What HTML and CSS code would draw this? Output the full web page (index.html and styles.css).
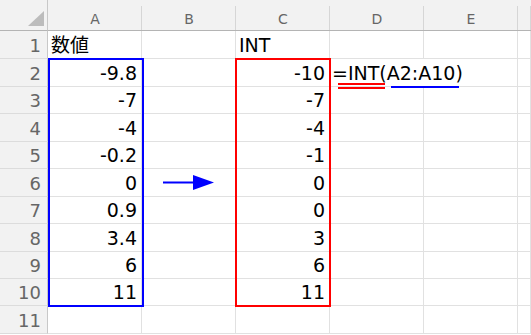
FILE: index.html
```html
<!DOCTYPE html>
<html lang="ja">
<head>
  <meta charset="UTF-8">
  <title>INT関数</title>
  <link rel="stylesheet" href="styles.css">
</head>
<body>
  <div class="sheet">
    <!-- Column headers -->
    <div class="corner">
      <svg width="16" height="15" viewBox="0 0 16 15"><polygon points="16,0 16,15 0,15" fill="#bcbcbc"/></svg>
    </div>
    <div class="col-head">A</div>
    <div class="col-head">B</div>
    <div class="col-head">C</div>
    <div class="col-head">D</div>
    <div class="col-head">E</div>
    <div class="col-head"></div>

    <!-- Row 1 -->
    <div class="row-head">1</div>
    <div class="cell text">数値</div>
    <div class="cell"></div>
    <div class="cell text">INT</div>
    <div class="cell"></div>
    <div class="cell"></div>
    <div class="cell"></div>

    <!-- Row 2 -->
    <div class="row-head">2</div>
    <div class="cell num">-9.8</div>
    <div class="cell"></div>
    <div class="cell num">-10</div>
    <div class="cell text spill">
      =INT(A2:A10)
      <span class="mark mark-red"></span>
      <span class="mark mark-blue"></span>
    </div>
    <div class="cell"></div>
    <div class="cell"></div>

    <!-- Row 3 -->
    <div class="row-head">3</div>
    <div class="cell num">-7</div>
    <div class="cell"></div>
    <div class="cell num">-7</div>
    <div class="cell"></div>
    <div class="cell"></div>
    <div class="cell"></div>

    <!-- Row 4 -->
    <div class="row-head">4</div>
    <div class="cell num">-4</div>
    <div class="cell"></div>
    <div class="cell num">-4</div>
    <div class="cell"></div>
    <div class="cell"></div>
    <div class="cell"></div>

    <!-- Row 5 -->
    <div class="row-head">5</div>
    <div class="cell num">-0.2</div>
    <div class="cell"></div>
    <div class="cell num">-1</div>
    <div class="cell"></div>
    <div class="cell"></div>
    <div class="cell"></div>

    <!-- Row 6 -->
    <div class="row-head">6</div>
    <div class="cell num">0</div>
    <div class="cell arrow">
      <svg width="52" height="15" viewBox="0 0 52 15"><rect x="0" y="6.5" width="32" height="2" fill="#0000ff"/><polygon points="30,0 51,7.5 30,15" fill="#0000ff"/></svg>
    </div>
    <div class="cell num">0</div>
    <div class="cell"></div>
    <div class="cell"></div>
    <div class="cell"></div>

    <!-- Row 7 -->
    <div class="row-head">7</div>
    <div class="cell num">0.9</div>
    <div class="cell"></div>
    <div class="cell num">0</div>
    <div class="cell"></div>
    <div class="cell"></div>
    <div class="cell"></div>

    <!-- Row 8 -->
    <div class="row-head">8</div>
    <div class="cell num">3.4</div>
    <div class="cell"></div>
    <div class="cell num">3</div>
    <div class="cell"></div>
    <div class="cell"></div>
    <div class="cell"></div>

    <!-- Row 9 -->
    <div class="row-head">9</div>
    <div class="cell num">6</div>
    <div class="cell"></div>
    <div class="cell num">6</div>
    <div class="cell"></div>
    <div class="cell"></div>
    <div class="cell"></div>

    <!-- Row 10 -->
    <div class="row-head">10</div>
    <div class="cell num">11</div>
    <div class="cell"></div>
    <div class="cell num">11</div>
    <div class="cell"></div>
    <div class="cell"></div>
    <div class="cell"></div>

    <!-- Row 11 -->
    <div class="row-head">11</div>
    <div class="cell"></div>
    <div class="cell"></div>
    <div class="cell"></div>
    <div class="cell"></div>
    <div class="cell"></div>
    <div class="cell"></div>

    <!-- Range highlights -->
    <div class="range range-blue"></div>
    <div class="range range-red"></div>
  </div>
</body>
</html>
```

FILE: styles.css
```css
/* General Styles */
body {
  margin: 0;
  background-color: #fff;
  font-family: 'DejaVu Sans', 'Noto Sans CJK JP', sans-serif;
  color: #000;
  overflow: hidden;
}

.sheet {
  position: relative;
  display: grid;
  grid-template-columns: 48px repeat(5, 94px) 1fr;
  grid-template-rows: 31px 28px 28px 27px 28px 27px 28px 27px 28px 27px 27px 28px;
  width: 531px;
}

/* Headers */
.corner,
.col-head,
.row-head {
  box-sizing: border-box;
  background-color: #f2f2f2;
  color: #666;
}

.corner {
  display: flex;
  justify-content: flex-end;
  align-items: flex-end;
  padding: 0 3px 4px 0;
  border-right: 1px solid #c8c8c8;
  border-bottom: 1px solid #b4b4b4;
}

.col-head {
  display: flex;
  justify-content: center;
  align-items: flex-end;
  padding-bottom: 4px;
  font-size: 14px;
  line-height: 1;
  border-bottom: 1px solid #b4b4b4;
  background: linear-gradient(#d6d6d6, #d6d6d6) right bottom / 1px calc(100% - 6px) no-repeat, #f2f2f2;
}

.row-head {
  display: flex;
  justify-content: flex-end;
  align-items: flex-end;
  padding: 0 6px 3px 0;
  font-size: 18px;
  line-height: 1;
  border-right: 1px solid #c8c8c8;
  border-bottom: 1px solid #dcdcdc;
}

/* Cells */
.cell {
  box-sizing: border-box;
  display: flex;
  align-items: flex-end;
  padding: 0 4px 3px 3px;
  font-size: 19px;
  line-height: 1;
  white-space: nowrap;
  border-right: 1px solid #e1e1e1;
  border-bottom: 1px solid #e1e1e1;
}

.num {
  justify-content: flex-end;
}

.text {
  justify-content: flex-start;
}

.spill {
  position: relative;
  padding-left: 2px;
  border-right-color: transparent;
}

.arrow {
  justify-content: center;
  align-items: center;
  padding: 0;
}

.arrow svg {
  display: block;
}

/* Formula reference marks */
.mark {
  position: absolute;
}

.mark-red {
  left: 8px;
  top: 24px;
  width: 47px;
  height: 2px;
  border-top: 2px solid #ff0000;
  border-bottom: 2px solid #ff0000;
}

.mark-blue {
  left: 61px;
  top: 27px;
  width: 68px;
  height: 2px;
  background-color: #0000ff;
}

/* Range outlines */
.range {
  position: absolute;
  top: 58px;
  width: 96px;
  height: 249px;
  box-sizing: border-box;
  pointer-events: none;
}

.range-blue {
  left: 48px;
  border: 2px solid #0000ff;
}

.range-red {
  left: 235px;
  border: 2px solid #ff0000;
}
```
